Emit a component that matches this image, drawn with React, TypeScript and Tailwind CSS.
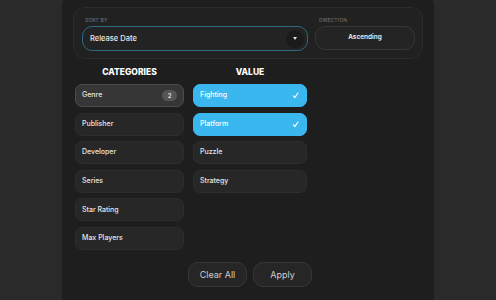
import React, { useState } from 'react';

const categories = ['Genre', 'Publisher', 'Developer', 'Series', 'Star Rating', 'Max Players'];
const values = ['Fighting', 'Platform', 'Puzzle', 'Strategy'];

const App: React.FC = () => {
  const [active] = useState('Genre');
  const [picked, setPicked] = useState<string[]>(['Fighting', 'Platform']);

  const toggle = (v: string) =>
    setPicked((p) => (p.includes(v) ? p.filter((x) => x !== v) : [...p, v]));

  return (
    <div
      className="w-full h-[300px] overflow-hidden bg-[#2a2a2a]"
      style={{ fontFamily: 'Inter, "Open Sans", sans-serif' }}
    >
      <div className="mx-auto w-[372px] h-[320px] -mt-[6px] rounded-xl bg-[#1e1e1e] px-[11px] pt-[13px]">
        {/* sort bar */}
        <div className="flex gap-[7px] rounded-[12px] border border-[#2c2c2c] bg-[#212121] pl-[8px] pr-[7px] pt-[8px] pb-[7px]">
          <div className="flex flex-col w-[228px]">
            <span className="text-[5px] leading-[8px] tracking-wide text-[#777777] pl-[3px] mb-[2px]">SORT BY</span>
            <div className="flex items-center justify-between h-[25px] rounded-[10px] border-[1.5px] border-[#2b6a80] bg-[#232323] pl-[7px] pr-[3px]">
              <span className="text-[7.5px] font-medium text-[#e8e8e8]">Release Date</span>
              <span className="flex items-center justify-center w-[18px] h-[18px] rounded-full bg-[#1b1b1b]">
                <svg width="4" height="3" viewBox="0 0 4 3">
                  <path d="M0 0 H4 L2 3 Z" fill="#e0e0e0" />
                </svg>
              </span>
            </div>
          </div>
          <div className="flex flex-col w-[101px]">
            <span className="text-[5px] leading-[8px] tracking-wide text-[#777777] pl-[4px] mb-[2px]">DIRECTION</span>
            <button className="h-[24px] rounded-[10px] border border-[#363636] bg-[#242424] text-[6.5px] font-semibold text-[#f0f0f0]">
              Ascending
            </button>
          </div>
        </div>

        {/* columns */}
        <div className="flex gap-[9px] pl-[2px] mt-[8px]">
          <div className="flex flex-col w-[109px]">
            <h3 className="text-center text-[8.5px] font-extrabold text-white leading-[11px] mb-[6px]">CATEGORIES</h3>
            <div className="flex flex-col gap-[5.6px]">
              {categories.map((c) => (
                <button
                  key={c}
                  className={`flex items-center justify-between h-[23px] rounded-[7px] pl-[6px] pr-[6px] text-[7px] font-medium text-[#e6e6e6] border ${
                    c === active ? 'bg-[#363636] border-[#4b4b4b]' : 'bg-[#272727] border-[#2d2d2d]'
                  }`}
                >
                  {c}
                  {c === active && (
                    <span className="flex items-center justify-center w-[15px] h-[11px] rounded-full bg-[#555555] text-[6px] font-semibold text-[#e0e0e0]">2</span>
                  )}
                </button>
              ))}
            </div>
          </div>

          <div className="flex flex-col w-[114px]">
            <h3 className="text-center text-[8.5px] font-extrabold text-white leading-[11px] mb-[6px]">VALUE</h3>
            <div className="flex flex-col gap-[5.6px]">
              {values.map((v) => {
                const on = picked.includes(v);
                return (
                  <button
                    key={v}
                    onClick={() => toggle(v)}
                    className={`flex items-center justify-between h-[23px] rounded-[7px] pl-[6px] pr-[7px] text-[7px] font-medium border ${
                      on ? 'bg-[#3ab7ef] border-[#3ab7ef] text-white' : 'bg-[#272727] border-[#2d2d2d] text-[#e6e6e6]'
                    }`}
                  >
                    {v}
                    {on && (
                      <svg width="7" height="7" viewBox="0 0 10 10" fill="none" stroke="white" strokeWidth="1.6" strokeLinecap="round" strokeLinejoin="round">
                        <path d="M2 5.5 L4 8 L8.5 1.5" />
                      </svg>
                    )}
                  </button>
                );
              })}
            </div>
          </div>
        </div>

        {/* actions */}
        <div className="flex justify-center gap-[6px] mt-[12px] pl-[4px]">
          <button className="w-[59px] h-[25px] rounded-[10px] border border-[#363636] bg-[#262626] text-[9px] text-[#cfcfcf]">
            Clear All
          </button>
          <button className="w-[59px] h-[25px] rounded-[10px] border border-[#363636] bg-[#262626] text-[9px] text-[#cfcfcf]">
            Apply
          </button>
        </div>
      </div>
    </div>
  );
};

export default App;
